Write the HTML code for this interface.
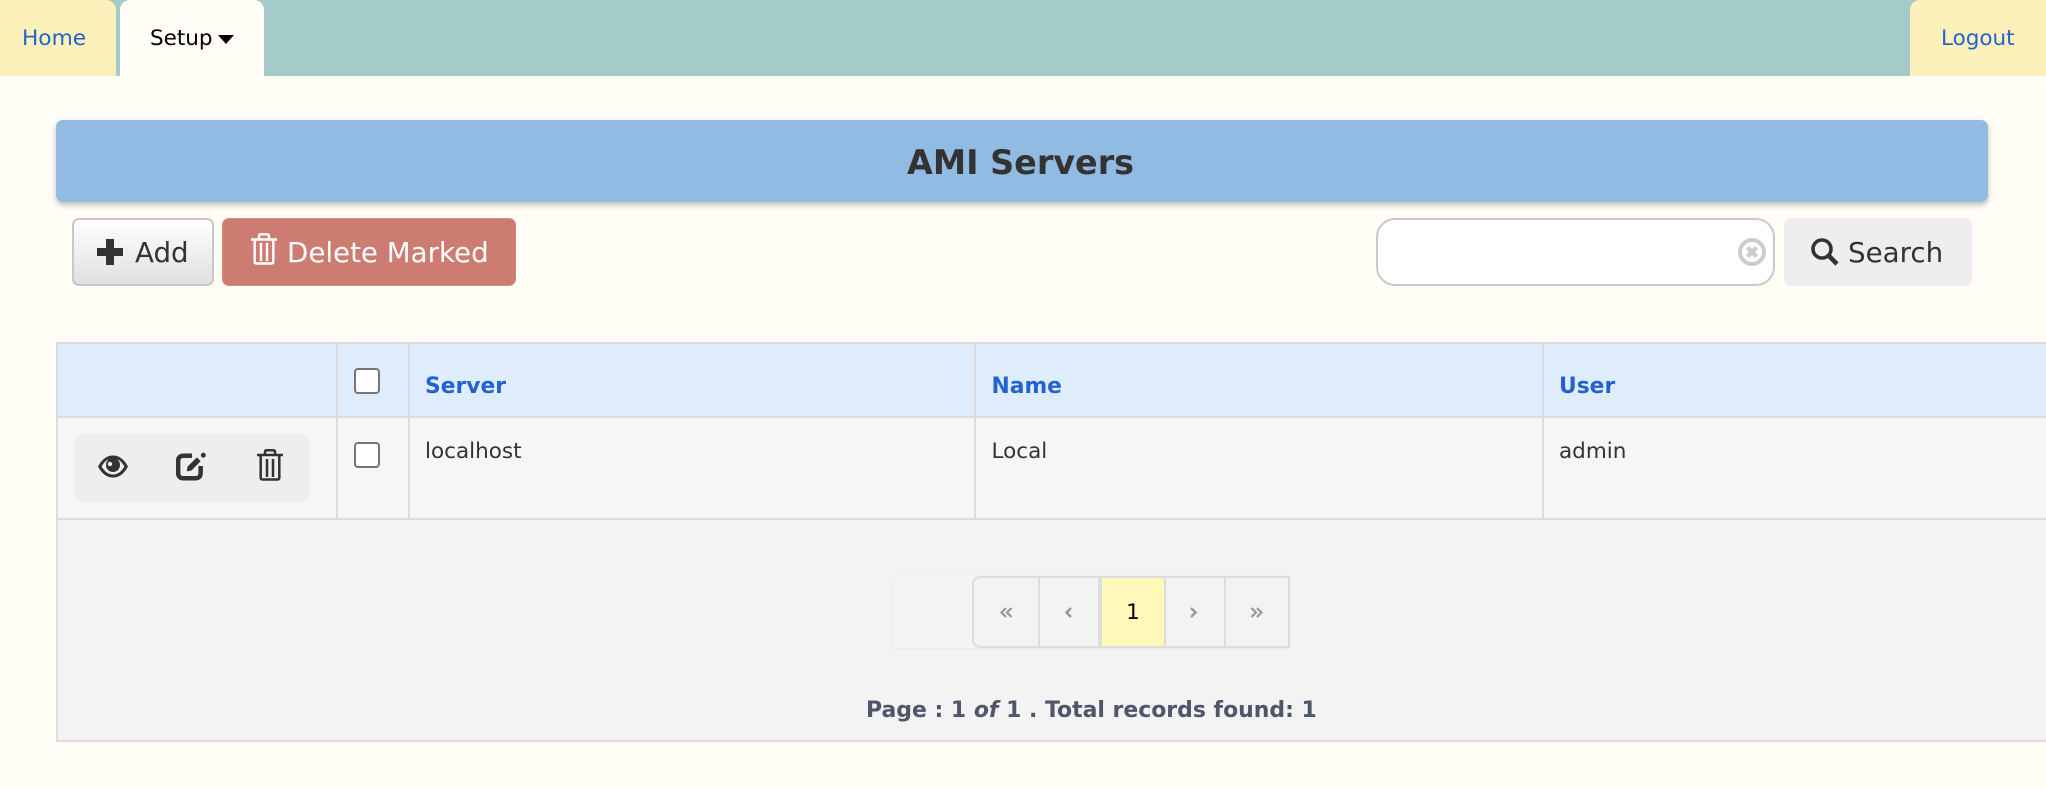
<!DOCTYPE html>
<html lang="en">
<head>
<meta charset="utf-8">
<title>AMI Servers</title>
<style>
html,body{margin:0;padding:0;width:2046px;height:788px;overflow:hidden;background:#fffdf6;font-family:"DejaVu Sans","Liberation Sans",sans-serif;}
.a{position:absolute;white-space:nowrap;line-height:normal;}
.b{position:absolute;box-sizing:border-box;}
svg{position:absolute;display:block;}
.cb{position:absolute;box-sizing:border-box;width:26px;height:26px;border:2px solid #767676;border-radius:4px;background:#fff;}
.pc{position:absolute;top:578px;height:68px;display:flex;align-items:center;justify-content:center;color:#000;font-size:21.5px;box-sizing:border-box;}
</style>
</head>
<body>
<div class="b" style="left:0;top:0;width:2046px;height:76px;background:#a4cbca;"></div>
<div class="b" style="left:0;top:0;width:116px;height:76px;background:#fdf1bb;border-top-right-radius:10px;"></div>
<div class="b" style="left:120px;top:0;width:144px;height:76px;background:#fffdf6;border-radius:10px 10px 0 0;"></div>
<div class="b" style="left:1910px;top:0;width:136px;height:76px;background:#fdf1bb;border-top-left-radius:10px;"></div>
<div class="a" style="left:22px;top:26px;font-size:21.7px;color:#2463cf;">Home</div>
<div class="a" style="left:150px;top:26px;font-size:21.5px;color:#000;">Setup</div>
<svg style="left:218px;top:35px;" width="16" height="10" viewBox="0 0 16 10"><path d="M0 0H16L8 9Z" fill="#000"/></svg>
<div class="a" style="left:1941px;top:26px;font-size:21.5px;color:#2463cf;">Logout</div>

<div class="b" style="left:56px;top:120px;width:1932px;height:82px;background:#92bbe3;border-radius:7px;box-shadow:0 3px 6px rgba(0,0,0,.25);"></div>
<div class="a" style="left:907px;top:143px;font-size:33.4px;font-weight:bold;color:#333;">AMI Servers</div>

<div class="b" style="left:72px;top:218px;width:142px;height:68px;border:2px solid #c8c8c8;border-radius:7px;background:linear-gradient(#fff,#e0e0e0);"></div>
<svg style="left:97px;top:239px;" width="26" height="26" viewBox="0 0 26 26"><path d="M9 0H17V9H26V17H17V26H9V17H0V9H9Z" fill="#333"/></svg>
<div class="a" style="left:135px;top:235.500px;font-size:27.700px;color:#333;">Add</div>

<div class="b" style="left:222px;top:218px;width:294px;height:68px;background:#cd7c72;border:1px solid #d68a80;border-radius:7px;"></div>
<svg style="left:251px;top:233px;" width="26" height="32" viewBox="0 0 26 32" fill="none" stroke="#fff" stroke-width="2.400"><path d="M0 6.500H26M8 6V3Q8 1.300 10 1.300H16Q18 1.300 18 3V6M3.700 7V28.500Q3.700 30.500 5.500 30.500H20.500Q22.300 30.500 22.300 28.500V7M10 10V28M16 10V28"/></svg>
<div class="a" style="left:287px;top:235.500px;font-size:27.700px;color:#fff;">Delete Marked</div>

<div class="b" style="left:1376px;top:218px;width:399px;height:68px;background:#fff;border:2px solid #ccc8c2;border-radius:19px;"></div>
<svg style="left:1738px;top:238px;" width="28" height="28" viewBox="0 0 28 28"><circle cx="14" cy="14" r="12" fill="none" stroke="#ccc" stroke-width="4"/><path d="M9.500 9.500L18.500 18.500M18.500 9.500L9.500 18.500" stroke="#ccc" stroke-width="4.400"/></svg>
<div class="b" style="left:1784px;top:218px;width:188px;height:68px;background:#eee;border-radius:7px;"></div>
<svg style="left:1811px;top:238px;" width="28" height="28" viewBox="0 0 28 28" fill="none" stroke="#333"><circle cx="11" cy="11" r="9" stroke-width="3.600"/><path d="M17.500 17.500L26 26" stroke-width="4.600"/></svg>
<div class="a" style="left:1848px;top:235.500px;font-size:27.700px;color:#333;">Search</div>

<div class="b" style="left:56px;top:342px;width:1990px;height:400px;background:#f3f3f3;border:solid #ddd;border-width:2px 0 2px 2px;"></div>
<div class="b" style="left:58px;top:344px;width:1988px;height:72px;background:#dfecfc;"></div>
<div class="b" style="left:58px;top:418px;width:1988px;height:100px;background:#f6f6f6;"></div>
<div class="b" style="left:58px;top:416px;width:1988px;height:2px;background:#ddd;"></div>
<div class="b" style="left:58px;top:518px;width:1988px;height:2px;background:#ddd;"></div>
<div class="b" style="left:336px;top:344px;width:2px;height:174px;background:#ddd;"></div>
<div class="b" style="left:408px;top:344px;width:2px;height:174px;background:#ddd;"></div>
<div class="b" style="left:974px;top:344px;width:2px;height:174px;background:#ddd;"></div>
<div class="b" style="left:1542px;top:344px;width:2px;height:174px;background:#ddd;"></div>

<div class="cb" style="left:354px;top:368px;"></div>
<div class="a" style="left:425px;top:374px;font-size:21.800px;font-weight:bold;color:#2463cf;">Server</div>
<div class="a" style="left:991.500px;top:374px;font-size:21.800px;font-weight:bold;color:#2463cf;">Name</div>
<div class="a" style="left:1559px;top:374px;font-size:21.800px;font-weight:bold;color:#2463cf;">User</div>

<div class="b" style="left:74px;top:434px;width:236px;height:68px;background:#eee;border-radius:8px;"></div>
<svg style="left:98px;top:455px;" width="30" height="23" viewBox="0 0 30 23"><path d="M0 11.500C4 4 9 0.500 15 0.500S26 4 30 11.500C26 19 21 22.500 15 22.500S4 19 0 11.500Z" fill="#333"/><path d="M3.500 11.500C6 7.500 8 5.500 10 4.500A8 8 0 0 0 20 4.500C22 5.500 24 7.500 26.500 11.500C23 17 19.500 19.500 15 19.500S7 17 3.500 11.500Z" fill="#eee"/><circle cx="15" cy="10" r="7" fill="#333"/><circle cx="12" cy="9" r="2.200" fill="#eee"/></svg>
<svg style="left:176px;top:452px;" width="30" height="29" viewBox="0 0 28 27"><path d="M15 3.500H7Q2 3.500 2 8.500V19.500Q2 24.500 7 24.500H18Q23 24.500 23 19.500V13" fill="none" stroke="#333" stroke-width="4.200"/><path d="M10 18L10.800 13.500L19.500 5L23 8.500L14.500 17.200Z" fill="#333"/><circle cx="25.500" cy="3" r="2.300" fill="#333"/></svg>
<svg style="left:257px;top:449px;" width="26" height="32" viewBox="0 0 26 32" fill="none" stroke="#333" stroke-width="2.500"><path d="M0 6H26M8 5.500V3Q8 1.300 10 1.300H16Q18 1.300 18 3V5.500M3.700 7V28.500Q3.700 30.500 5.500 30.500H20.500Q22.300 30.500 22.300 28.500V7M10 10V28M16 10V28"/></svg>
<div class="cb" style="left:354px;top:442px;"></div>
<div class="a" style="left:425px;top:438.500px;font-size:21.500px;color:#333;">localhost</div>
<div class="a" style="left:991.500px;top:438.500px;font-size:21.500px;color:#333;">Local</div>
<div class="a" style="left:1559px;top:438.500px;font-size:21.500px;color:#333;">admin</div>

<div class="b" style="left:892px;top:576px;width:398px;height:72px;border-radius:5px;box-shadow:0 1px 3px rgba(0,0,0,.06);"></div>
<div class="b" style="left:972px;top:576px;width:318px;height:72px;border:2px solid #ddd;border-radius:8px 0 0 8px;background:#f3f3f3;"></div>
<div class="b" style="left:1038px;top:578px;width:2px;height:68px;background:#ddd;"></div>
<div class="b" style="left:1098px;top:578px;width:4px;height:68px;background:#ddd;"></div>
<div class="b" style="left:1102px;top:578px;width:62px;height:68px;background:#fef8b9;"></div>
<div class="b" style="left:1164px;top:578px;width:2px;height:68px;background:#ddd;"></div>
<div class="b" style="left:1224px;top:578px;width:2px;height:68px;background:#ddd;"></div>
<svg style="left:1000px;top:607px;" width="13" height="11" viewBox="0 0 13 11" fill="none" stroke="#999" stroke-width="2.200"><path d="M6 1L1.500 5.500L6 10M11.500 1L7 5.500L11.500 10"/></svg>
<svg style="left:1065px;top:607px;" width="7" height="11" viewBox="0 0 7 11" fill="none" stroke="#999" stroke-width="2.400"><path d="M6 1L1.500 5.500L6 10"/></svg>
<div class="pc" style="left:1102px;width:62px;">1</div>
<svg style="left:1190px;top:607px;" width="7" height="11" viewBox="0 0 7 11" fill="none" stroke="#999" stroke-width="2.400"><path d="M1 1L5.500 5.500L1 10"/></svg>
<svg style="left:1250px;top:607px;" width="13" height="11" viewBox="0 0 13 11" fill="none" stroke="#999" stroke-width="2.200"><path d="M1.500 1L6 5.500L1.500 10M7 1L11.500 5.500L7 10"/></svg>

<div class="a" style="left:866px;top:698px;font-size:21.950px;font-weight:bold;color:#4f566b;">Page : 1 <i>of</i> 1 . Total records found: 1</div>
</body>
</html>
